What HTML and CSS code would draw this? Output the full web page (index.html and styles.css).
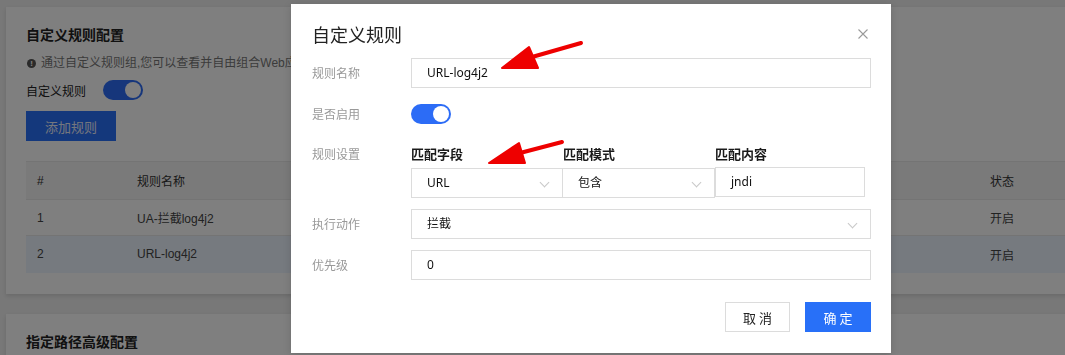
FILE: index.html
```html
<!DOCTYPE html>
<html lang="zh-CN">
  <head>
    <meta charset="UTF-8" />
    <meta name="viewport" content="width=device-width, initial-scale=1.0" />
    <title>自定义规则</title>
    <link rel="stylesheet" href="styles.css">
  </head>
  <body>
    <div class="page">
      <section class="card">
        <h2 class="card-title">自定义规则配置</h2>
        <p class="tip"><span class="tip-icon">!</span><span class="tip-text">通过自定义规则组,您可以查看并自由组合Web应</span></p>
        <div class="switch-row">
          <span>自定义规则</span>
          <span class="switch on"></span>
        </div>
        <button class="btn btn-primary btn-add">添加规则</button>

        <table class="rule-table">
          <thead>
            <tr>
              <th class="col-no">#</th>
              <th class="col-name">规则名称</th>
              <th></th>
              <th class="col-status">状态</th>
            </tr>
          </thead>
          <tbody>
            <tr>
              <td class="col-no">1</td>
              <td class="col-name">UA-拦截log4j2</td>
              <td></td>
              <td class="col-status">开启</td>
            </tr>
            <tr class="active">
              <td class="col-no">2</td>
              <td class="col-name">URL-log4j2</td>
              <td></td>
              <td class="col-status">开启</td>
            </tr>
          </tbody>
        </table>
      </section>

      <section class="card">
        <h2 class="card-title">指定路径高级配置</h2>
      </section>
    </div>

    <div class="mask"></div>

    <div class="modal">
      <div class="modal-head">
        <h3>自定义规则</h3>
        <svg class="close" width="10" height="10" viewBox="0 0 10 10">
          <path d="M0.5 0.5 L9.5 9.5 M9.5 0.5 L0.5 9.5" stroke="#9a9a9a" stroke-width="1.1" fill="none" />
        </svg>
      </div>

      <div class="form-item">
        <label>规则名称</label>
        <div class="control">
          <div class="input">URL-log4j2</div>
        </div>
      </div>

      <div class="form-item">
        <label>是否启用</label>
        <div class="control control-center">
          <span class="switch on"></span>
        </div>
      </div>

      <div class="form-item">
        <label class="label-short">规则设置</label>
        <div class="control match-grid">
          <div class="match-head">匹配字段</div>
          <div class="match-head">匹配模式</div>
          <div class="match-head">匹配内容</div>
          <div class="select">URL<span class="chevron"></span></div>
          <div class="select select-join">包含<span class="chevron"></span></div>
          <div class="input input-content">jndi</div>
        </div>
      </div>

      <div class="form-item">
        <label>执行动作</label>
        <div class="control">
          <div class="select">拦截<span class="chevron"></span></div>
        </div>
      </div>

      <div class="form-item">
        <label>优先级</label>
        <div class="control">
          <div class="input">0</div>
        </div>
      </div>

      <div class="modal-foot">
        <button class="btn btn-default">取 消</button>
        <button class="btn btn-primary btn-ok">确 定</button>
      </div>
    </div>

    <!-- annotation arrows -->
    <svg class="arrows" width="1065" height="355" viewBox="0 0 1065 355">
      <g fill="#ee0000" stroke="#ee0000" stroke-linecap="round" stroke-linejoin="round">
        <line x1="581" y1="43" x2="532" y2="57" stroke-width="4" />
        <polygon points="502,68 529,47 538,68" stroke-width="2" />
        <line x1="562" y1="142" x2="520" y2="153" stroke-width="4" />
        <polygon points="489,163 519,143 525,163" stroke-width="2" />
      </g>
    </svg>
  </body>
</html>
```

FILE: styles.css
```css
/* Global */
* {
  margin: 0;
  padding: 0;
  box-sizing: border-box;
}

body {
  background-color: #f0f0f0;
  color: #333;
  font-family: "Liberation Sans", "Noto Sans CJK SC", sans-serif;
  font-size: 12px;
  overflow: hidden;
}

/* Background page */
.page {
  width: 1100px;
  padding: 7px 0 0 6px;
}

.card {
  width: 1090px;
  background: #fff;
  padding: 17px 20px 21px;
  box-shadow: 0 2px 4px rgba(0, 0, 0, 0.12);
}

.card + .card {
  margin-top: 20px;
}

.card-title {
  font-size: 14px;
  line-height: 20px;
  font-weight: 700;
  color: #222;
  font-family: "Noto Sans CJK SC", sans-serif;
}

.tip {
  display: flex;
  align-items: center;
  margin-top: 10px;
  line-height: 18px;
  color: #777;
}

.tip-text {
  white-space: nowrap;
}

.tip-icon {
  width: 9px;
  height: 9px;
  border-radius: 50%;
  background: #555;
  color: #fff;
  font-size: 8px;
  line-height: 9px;
  text-align: center;
  font-weight: 700;
  margin: 0 5px 0 1px;
}

.switch-row {
  display: flex;
  align-items: center;
  margin-top: 8px;
  height: 20px;
  color: #222;
}

.switch-row .switch {
  margin-left: 17px;
}

.switch {
  display: inline-block;
  position: relative;
  width: 40px;
  height: 20px;
  border-radius: 10px;
  background: #ccc;
}

.switch.on {
  background: #2c6cf6;
}

.switch::after {
  content: "";
  position: absolute;
  top: 2px;
  left: 2px;
  width: 16px;
  height: 16px;
  border-radius: 50%;
  background: #fff;
}

.switch.on::after {
  left: 22px;
}

.btn {
  height: 30px;
  border: 1px solid transparent;
  font-size: 13px;
  font-family: "Noto Sans CJK SC", sans-serif;
  cursor: pointer;
  background: none;
}

.btn-primary {
  background: #2870f8;
  color: #fff;
}

.btn-default {
  background: #fff;
  border-color: #dcdcdc;
  color: #222;
}

.btn-add {
  display: block;
  width: 90px;
  margin-top: 11px;
  color: #e8eefc;
}

/* Table */
.rule-table {
  width: 1050px;
  margin-top: 20px;
  border-collapse: collapse;
  text-align: left;
}

.rule-table th,
.rule-table td {
  padding: 0 11px;
  font-weight: 400;
  border-top: 1px solid #e8e8e8;
}

.rule-table th {
  height: 38px;
  background: #f4f4f4;
}

.rule-table td {
  height: 36px;
  color: #444;
}

.rule-table tr.active td {
  background: #ecf4ff;
  height: 37px;
}

.col-no {
  width: 100px;
}

.col-name {
  width: 150px;
}

.col-status {
  width: 97px;
}

/* Mask */
.mask {
  position: fixed;
  inset: 0;
  background: rgba(0, 0, 0, 0.5);
}

/* Modal */
.modal {
  position: absolute;
  top: 4px;
  left: 291px;
  width: 600px;
  background: #fff;
  padding: 18px 20px 21px 21px;
  font-family: "Noto Sans", "Noto Sans CJK SC", sans-serif;
  box-shadow: 0 2px 8px rgba(0, 0, 0, 0.15);
}

.modal-head {
  display: flex;
  justify-content: space-between;
  align-items: center;
  height: 24px;
  margin-bottom: 12px;
}

.modal-head h3 {
  font-size: 18px;
  line-height: 24px;
  font-weight: 400;
  color: #222;
  font-family: "Noto Sans CJK SC", sans-serif;
}

.close {
  margin-right: 3px;
}

.form-item {
  display: flex;
  margin-bottom: 11px;
}

.form-item label {
  width: 99px;
  flex-shrink: 0;
  line-height: 30px;
  color: #999;
  font-family: "Noto Sans CJK SC", sans-serif;
}

.form-item .label-short {
  line-height: 28px;
}

.control {
  width: 460px;
}

.control-center {
  display: flex;
  align-items: center;
  height: 30px;
}

.input,
.select {
  position: relative;
  height: 30px;
  line-height: 28px;
  border: 1px solid #dcdcdc;
  padding: 0 15px;
  color: #111;
}

.chevron {
  position: absolute;
  right: 14px;
  top: 10px;
  width: 7px;
  height: 7px;
  border-right: 1px solid #c8c8c8;
  border-bottom: 1px solid #c8c8c8;
  transform: rotate(45deg);
}

.match-grid {
  display: grid;
  grid-template-columns: 152px 152px 150px;
}

.match-head {
  height: 28px;
  line-height: 28px;
  font-size: 13px;
  font-weight: 700;
  color: #1a1a1a;
  font-family: "Noto Sans CJK SC", sans-serif;
}

.select-join {
  margin-left: -1px;
}

.input-content {
  margin-top: -1px;
}

.modal-foot {
  display: flex;
  justify-content: flex-end;
  gap: 15px;
  margin-top: 22px;
}

.modal-foot .btn-default {
  width: 65px;
}

.btn-ok {
  width: 66px;
}

/* Annotation */
.arrows {
  position: absolute;
  top: 0;
  left: 0;
  pointer-events: none;
}
```
